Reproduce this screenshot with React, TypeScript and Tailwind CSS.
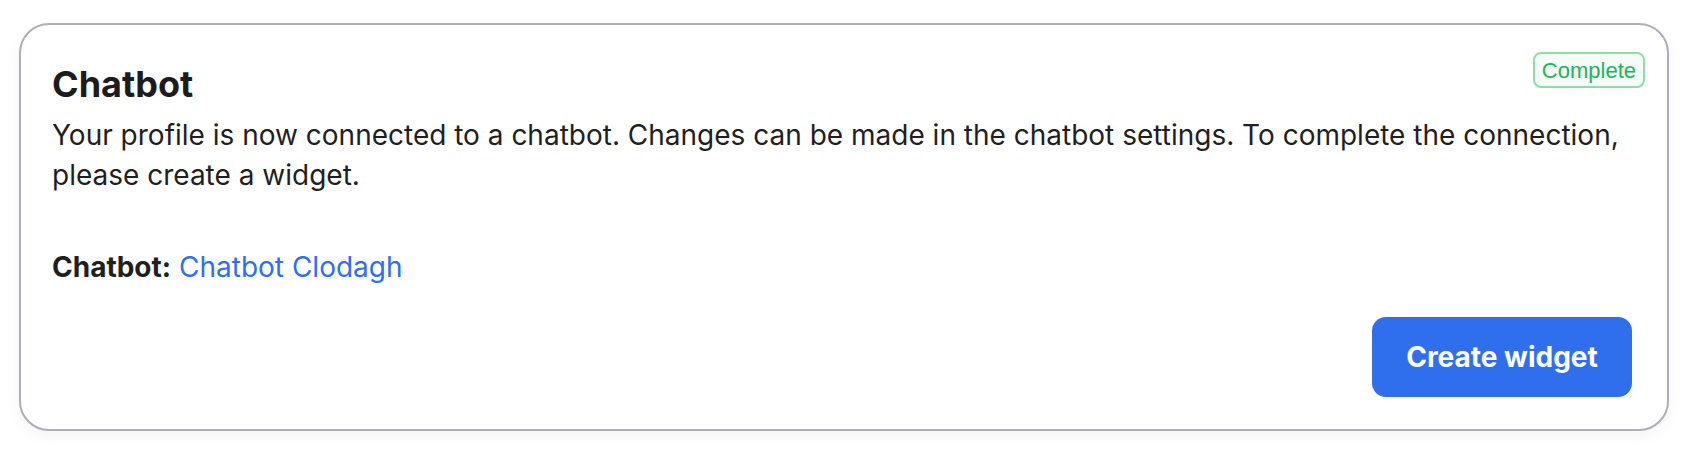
export default function App() {
  return (
    <div className="h-[450px] w-full bg-white pt-[23px] pl-[19px] pr-[21px]" style={{ fontFamily: 'Inter, "Noto Sans", sans-serif' }}>
      {/* Card */}
      <div className="relative rounded-[30px] border-2 border-[#aeadb9] bg-white pt-[37px] pl-[31px] pr-[35px] pb-[32px] shadow-[0_4px_14px_rgba(0,0,0,0.05)]">
        <span
          className="absolute top-[27px] right-[22px] flex h-[36px] items-center rounded-lg border-2 border-[#8fdca7] bg-[#f3fcf6] px-[7px] text-[22px] text-[#25b35a]"
          style={{ fontFamily: '"Liberation Sans", Arial, sans-serif' }}
        >
          Complete
        </span>

        <h2 className="text-[36px] leading-[44px] font-bold text-[#1c1c1e]">Chatbot</h2>
        <p className="mt-[9px] text-[28px] leading-[40px] text-[#1f1f22]">
          Your profile is now connected to a chatbot. Changes can be made in the chatbot settings. To complete the connection,
          please create a widget.
        </p>

        <div className="mt-[52px] text-[28px] leading-[40px] text-[#1f1f22]">
          <span className="font-bold">Chatbot:</span>{' '}
          <a href="#" className="text-[#2f6fee]">Chatbot Clodagh</a>
        </div>

        <div className="mt-[30px] flex justify-end">
          <button className="h-[80px] w-[260px] rounded-[14px] bg-[#2f6fee] text-[28px] font-bold text-white">
            Create widget
          </button>
        </div>
      </div>
    </div>
  );
}
